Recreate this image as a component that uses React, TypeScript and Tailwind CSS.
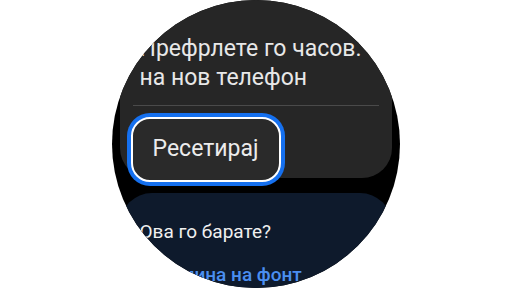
export default function App() {
  return (
    <div className="flex h-[288px] w-[511px] justify-center bg-white">
      <div
        className="flex h-[288px] w-[288px] flex-col items-center overflow-hidden rounded-full bg-black"
        style={{ fontFamily: "Roboto, 'Noto Sans', sans-serif" }}
      >
        <div className="flex w-[272px] shrink-0 flex-col rounded-b-[30px] bg-[#262626] pt-[34px]">
          <div className="px-5 text-[23px] leading-[29px] text-[#e8e8e8]">
            <div className="whitespace-nowrap">Префрлете го часов.</div>
            <div className="whitespace-nowrap">на нов телефон</div>
          </div>
          <div className="mx-[13px] mt-[13px] h-px bg-[#4a4a4a]" />
          <button className="mb-[-4px] ml-[11px] mt-[11px] flex h-[65px] w-[150px] items-center justify-center rounded-[19px] border-2 border-white bg-[#2a2a2a] text-[23px] text-[#ececec] ring-4 ring-[#1570ef]">
            Ресетирај
          </button>
        </div>
        <div className="mt-[15px] w-[272px] flex-1 rounded-t-[32px] bg-[#0e1a2c] px-5 pt-[27px]">
          <div className="whitespace-nowrap text-[19px] leading-[24px] text-[#f0f0f0]">
            Ова го барате?
          </div>
          <div className="mt-[19px] whitespace-nowrap text-[19px] font-medium leading-[24px] text-[#4a8ef0]">
            Големина на фонт
          </div>
        </div>
      </div>
    </div>
  );
}
